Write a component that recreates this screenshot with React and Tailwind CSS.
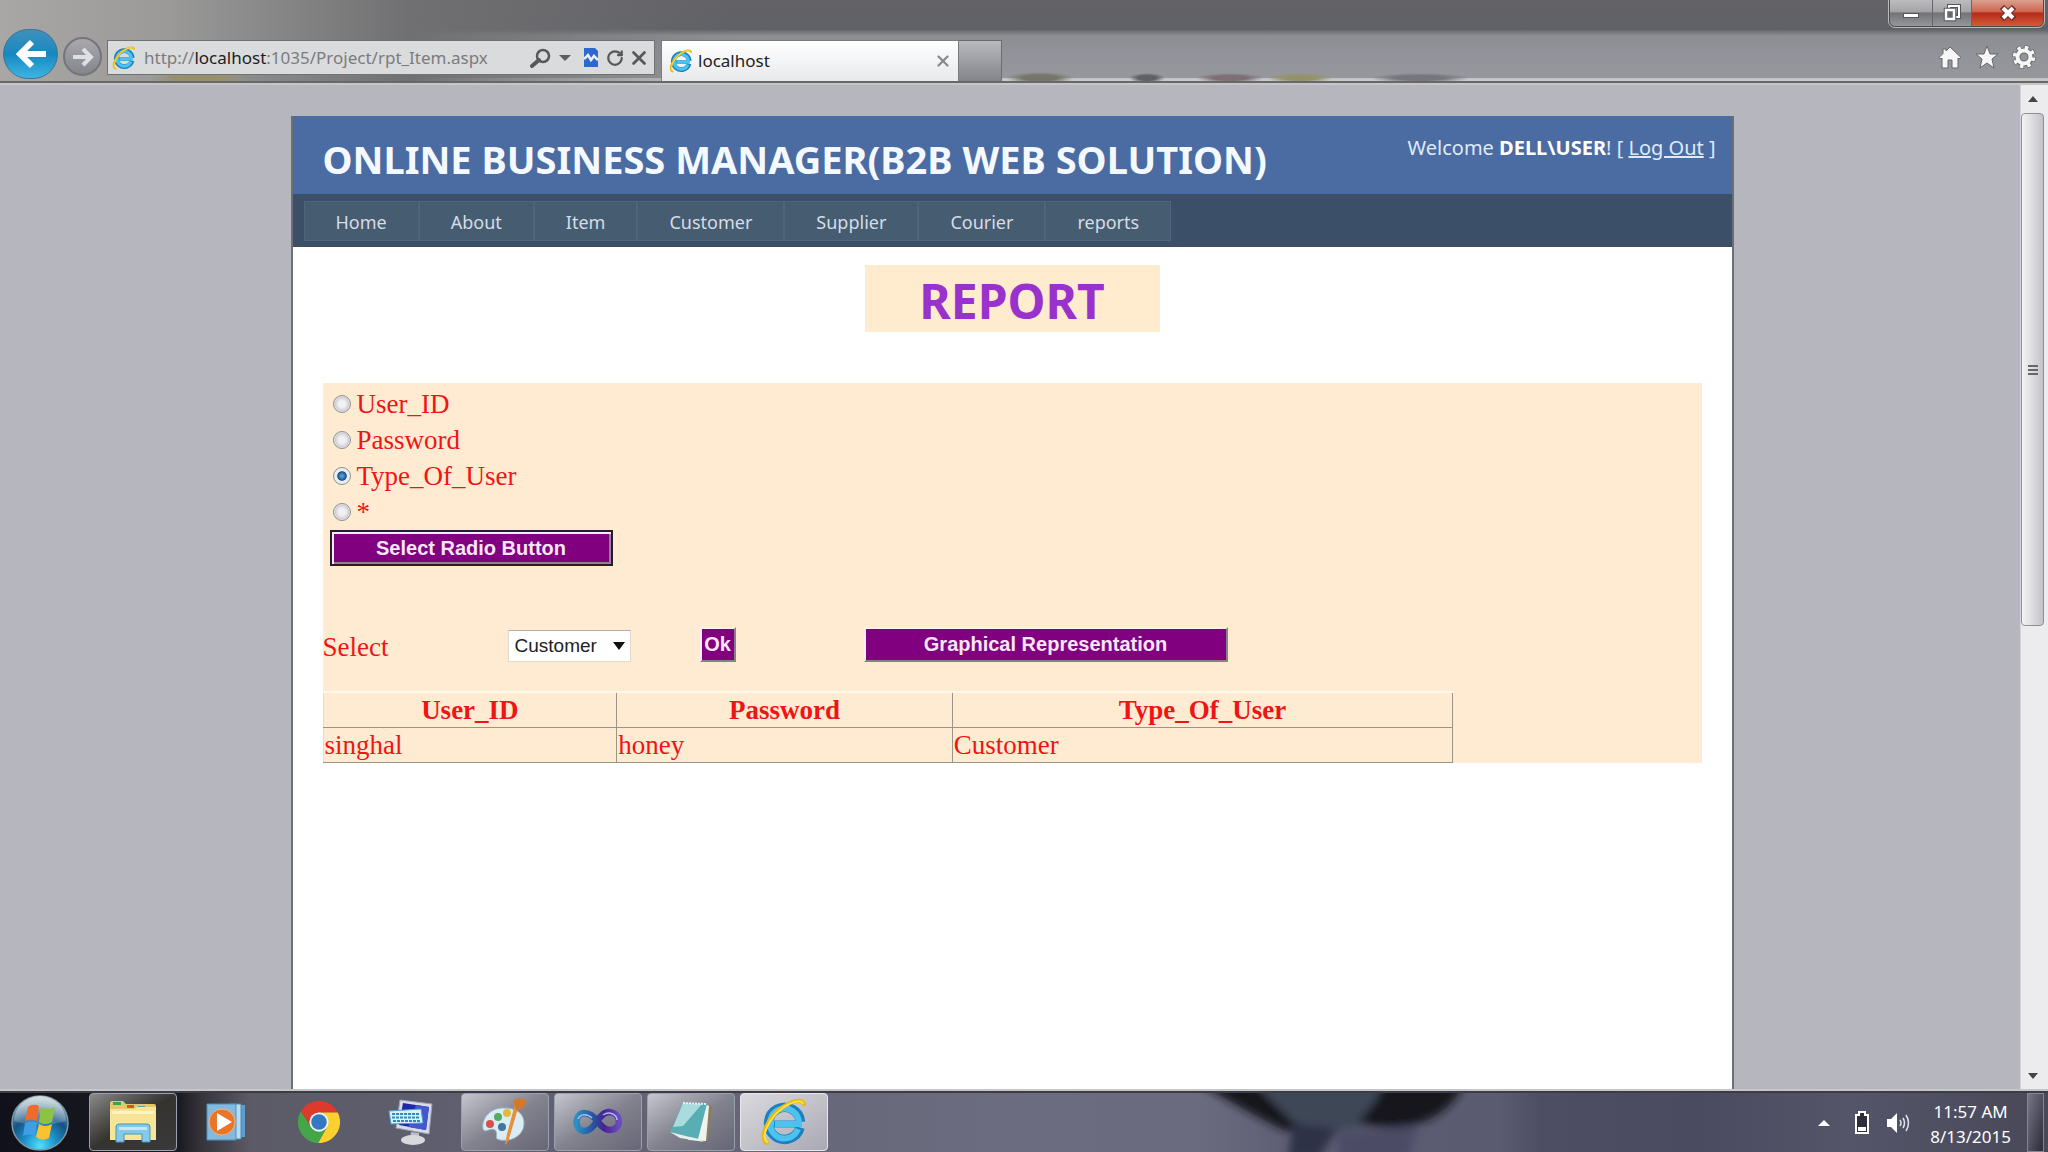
import { useState } from 'react';
import { RotateCw, X } from 'lucide-react';

const navItems = ['Home', 'About', 'Item', 'Customer', 'Supplier', 'Courier', 'reports'];
const fields = ['User_ID', 'Password', 'Type_Of_User', '*'];
const columns = ['User_ID', 'Password', 'Type_Of_User'];
const rows = [['singhal', 'honey', 'Customer']];

const IeLogo = ({ className }) => (
    <svg viewBox="0 0 48 48" className={className} aria-hidden="true">
        <path d="M39 26H14" stroke="#1c8fd0" strokeWidth="7" fill="none" />
        <path d="M40 29.500A16 16 0 1 1 40.500 24" stroke="#1c7fc0" strokeWidth="9.500" fill="none" />
        <path d="M38 31A14.500 15 0 1 1 39 26H15" stroke="#4cc3ee" strokeWidth="6" fill="none" />
        <path d="M7 45C-2 40 8 19 23 9C33 2 43 1 44 6" stroke="#e8b80c" strokeWidth="4" fill="none" strokeLinecap="round" />
        <path d="M7 44C0 38 10 19 24 9C33 3 41 2 43 5" stroke="#fbe04a" strokeWidth="2" fill="none" strokeLinecap="round" />
    </svg>
);

const StartOrb = () => (
    <svg viewBox="0 0 58 56" className="h-14 w-[58px]" aria-hidden="true">
        <defs>
            <radialGradient id="orb" cx="50%" cy="92%" r="85%">
                <stop offset="0" stopColor="#4fe0ff" />
                <stop offset="0.35" stopColor="#1b8fc8" />
                <stop offset="0.65" stopColor="#155385" />
                <stop offset="1" stopColor="#7f9fae" />
            </radialGradient>
            <linearGradient id="orbShine" x1="0" y1="0" x2="0" y2="1">
                <stop offset="0" stopColor="#fff" stopOpacity="0.65" />
                <stop offset="1" stopColor="#fff" stopOpacity="0.15" />
            </linearGradient>
        </defs>
        <ellipse cx="29" cy="28" rx="28" ry="27" fill="url(#orb)" stroke="#7d97a5" strokeWidth="1.500" />
        <path d="M3 26A26 25 0 0 1 55 26Q29 34 3 26Z" fill="url(#orbShine)" />
        <path d="M17 12Q22 8 28 11L26 26Q20 23 14 26Z" fill="#ee6b2c" />
        <path d="M30 12Q37 16 44 12L41 27Q34 31 28 27Z" fill="#8dc343" />
        <path d="M14 28Q20 25 26 28L24 41Q18 38 12 41Z" fill="#3f9fe6" />
        <path d="M28 29Q34 33 41 29L38 43Q31 47 25 42Z" fill="#fcc22e" />
    </svg>
);

const ExplorerIcon = () => (
    <svg viewBox="0 0 50 44" className="h-11 w-[50px]" aria-hidden="true">
        <path d="M2 3Q2 1 4 1H15L18 4H46Q48 4 48 6V40H2Z" fill="#e5c669" />
        <path d="M5 2H13V5H5Z" fill="#3aa357" />
        <path d="M19 5H26V8H19Z" fill="#d0562f" />
        <path d="M30 6H37V10H30Z" fill="#4a9fc4" />
        <path d="M2 9H26L29 7H48V40H2Z" fill="#f7e597" />
        <path d="M4 11H46V14H4Z" fill="#fdf4c2" />
        <path d="M8 42V27Q8 24 11 24H39Q42 24 42 27V42H34V34H16V42Z" fill="#85c9e8" stroke="#4796bd" />
        <path d="M11 27H39V30H11Z" fill="#c3e9f8" />
    </svg>
);

const MediaIcon = () => (
    <svg viewBox="0 0 40 38" className="h-[38px] w-10" aria-hidden="true">
        <path d="M28 2H39V34H28Z" fill="#5f9cc8" />
        <path d="M24 1H35V36H24Z" fill="#b8dcf1" stroke="#4b8cb8" />
        <path d="M1 1H30V37H1Z" fill="#83b9df" stroke="#4e8fbd" />
        <circle cx="16" cy="19" r="13" fill="#e8762a" stroke="#f4b483" />
        <path d="M11 10L26 19L11 28Z" fill="#fff" />
    </svg>
);

const ChromeIcon = () => (
    <svg viewBox="0 0 48 48" className="h-11 w-11" aria-hidden="true">
        <path d="M24 13.500H44.400A23 23 0 0 0 4.100 12.500L15 29Z" fill="#db3a2c" />
        <path d="M33 29L23 47A23 23 0 0 0 44.400 13.500H24Z" fill="#fbd02f" />
        <path d="M15 29L4.100 12.500A23 23 0 0 0 23 47L33 29Z" fill="#44a648" />
        <circle cx="24" cy="24" r="10.500" fill="#f1f3f5" />
        <circle cx="24" cy="24" r="8.500" fill="#3478c4" />
    </svg>
);

const DisplayIcon = () => (
    <svg viewBox="0 0 48 48" className="h-12 w-12" aria-hidden="true">
        <path d="M12 2L44 6L41 36L8 30Z" fill="#d7dce6" stroke="#9aa3b5" />
        <path d="M15 5L41 9L38 32L11 27Z" fill="#1d2aa8" />
        <path d="M28 7L41 9L38 32L20 29Z" fill="#4557cf" />
        <path d="M1 13L33 11L35 25L3 26Z" fill="#d8f0fb" stroke="#4f9fc7" />
        <path d="M4 16H31M4 19.500H32M5 23H33" stroke="#3089bd" strokeWidth="2" strokeDasharray="3 1" />
        <path d="M23 34L31 35V40H22Z" fill="#b9bdc6" />
        <ellipse cx="25" cy="42" rx="12" ry="5" fill="#d9d9dd" />
    </svg>
);

const PaintIcon = () => (
    <svg viewBox="0 0 48 50" className="h-[50px] w-12" aria-hidden="true">
        <path d="M24 11C10 10 0 21 2 32C4 37 9 30 14 33C18 37 12 42 19 43C33 45 43 37 43 26C43 17 36 11 24 11Z" fill="#dcecf4" stroke="#92b6cb" />
        <circle cx="9" cy="27" r="4" fill="#d9504b" />
        <circle cx="17" cy="20" r="4" fill="#54ad62" />
        <circle cx="26" cy="16" r="4" fill="#e5b93c" />
        <circle cx="21" cy="30" r="4" fill="#42759f" />
        <path d="M38 8L28 42Q25 49 24 47L26 37L34 7Z" fill="#e2923a" />
        <path d="M32 3L39 1L46 4L42 11L35 13Z" fill="#d3792c" />
    </svg>
);

const StudioIcon = () => (
    <svg viewBox="0 0 50 28" className="h-7 w-[50px]" aria-hidden="true">
        <defs>
            <linearGradient id="studio" x1="0" y1="0" x2="1" y2="0">
                <stop offset="0" stopColor="#2b8fc0" />
                <stop offset="0.45" stopColor="#284a9c" />
                <stop offset="0.65" stopColor="#4b2190" />
                <stop offset="1" stopColor="#6a4bc2" />
            </linearGradient>
        </defs>
        <path d="M25 14C20 7 15 5 11 5C1 6 1 22 11 23C23 23 25 4 36 4C49 5 49 22 37 22C32 22 28 18 25 14Z" fill="none" stroke="url(#studio)" strokeWidth="6.500" />
        <path d="M5 11C7 6 14 5 19 10M30 7C36 3 44 6 44 12" fill="none" stroke="#a5b9ef" strokeWidth="1.500" />
    </svg>
);

const NotepadIcon = () => (
    <svg viewBox="0 0 46 44" className="h-11 w-[46px]" aria-hidden="true">
        <path d="M38 5L44 6L40 40L34 42Z" fill="#8a7d5a" />
        <path d="M37 4L41 6L38 41L20 40Z" fill="#eef3ef" />
        <path d="M15 3L39 4L30 39L2 32Z" fill="#59aeb3" />
        <path d="M15 3L34 4L15 26L5 27Z" fill="#a9dcdc" />
        <path d="M2 32L30 39L36 42L12 38Z" fill="#e4efee" />
        <path d="M15 3L39 4" stroke="#e6f2f2" strokeWidth="2" strokeDasharray="2 1" />
    </svg>
);

const glass = 'border border-gray-400 bg-linear-to-br from-[#c6c6cf] via-[#83838f] to-[#666676]';

const pinned = [
    { name: 'Windows Explorer', icon: <ExplorerIcon />, style: 'border border-gray-400 bg-linear-to-br from-[#8b8b8b] via-[#34332f] to-[#3b3a3c]' },
    { name: 'Media Player', icon: <MediaIcon />, style: '' },
    { name: 'Chrome', icon: <ChromeIcon />, style: '' },
    { name: 'On-Screen Display', icon: <DisplayIcon />, style: '' },
    { name: 'Paint', icon: <PaintIcon />, style: glass },
    { name: 'Visual Studio', icon: <StudioIcon />, style: glass },
    { name: 'Notepad', icon: <NotepadIcon />, style: glass },
    { name: 'Internet Explorer', icon: <IeLogo className="h-12 w-12" />, style: 'border border-gray-200 bg-linear-to-br from-[#d9d9de] via-[#c3c2c9] to-[#a9a8b4]' },
];

const BrowserBar = () => (
    <header className="flex h-[83px] shrink-0 items-stretch border-b-2 border-[#686868] bg-[radial-gradient(ellipse_50px_8px_at_200px_78px,#97906f_50%,transparent_100%),radial-gradient(ellipse_34px_6px_at_1040px_78px,#77746a_50%,transparent_100%),radial-gradient(ellipse_18px_5px_at_1147px_78px,#5f6066_50%,transparent_100%),radial-gradient(ellipse_34px_5px_at_1230px_78px,#7d6f73_50%,transparent_100%),radial-gradient(ellipse_34px_5px_at_1300px_78px,#94926c_50%,transparent_100%),radial-gradient(ellipse_50px_5px_at_1420px_78px,#78757f_50%,transparent_100%),linear-gradient(to_right,#a9a7a5_0%,#9b9a99_8%,#707072_20%,transparent_36%),linear-gradient(to_bottom,#626267_0%,#606166_36%,#8d8e92_44%,#92949b_70%,#96979c_96%,#c8c8c8_97%)]">
        <div className="flex items-end gap-[5px] pb-[2px] pl-[3px]">
            <button type="button" aria-label="Back" className="flex h-[50px] w-[55px] items-center justify-center rounded-full border border-[#47718c] bg-linear-to-b from-[#3d91bd] via-[#1588bf] to-[#3bb5e4]">
                <svg viewBox="0 0 32 30" className="h-[30px] w-8">
                    <path d="M17 3L5 15L17 27M6 15H31" fill="none" stroke="#fff" strokeWidth="6" />
                </svg>
            </button>
            <button type="button" aria-label="Forward" className="mb-[3px] flex h-[39px] w-[39px] items-center justify-center rounded-full border-2 border-[#74757b] bg-linear-to-b from-[#a8a8ad] to-[#85868d]">
                <svg viewBox="0 0 24 22" className="h-[22px] w-6">
                    <path d="M12 3L20 11L12 19M2 11H20" fill="none" stroke="#dedfe2" strokeWidth="4" />
                </svg>
            </button>
        </div>
        <div className="mt-10 ml-[5px] flex h-[35px] w-[548px] items-center border border-[#717274] bg-[#dadbdc] pr-1 pl-1 text-[#58585a]">
            <IeLogo className="h-6 w-6 shrink-0" />
            <div className="ml-2 flex-1 font-['Noto_Sans','Open_Sans',sans-serif] text-[17px] text-[#7c7c7e]">
                http://<span className="text-[#1d1d1f]">localhost</span>:1035/Project/rpt_Item.aspx
            </div>
            <button type="button" aria-label="Search">
                <svg viewBox="0 0 22 20" className="h-5 w-[22px]">
                    <ellipse cx="14" cy="8" rx="6" ry="6" fill="none" stroke="#58585a" strokeWidth="2.500" />
                    <path d="M10 12L3 18" stroke="#58585a" strokeWidth="4" strokeLinecap="round" />
                </svg>
            </button>
            <svg viewBox="0 0 12 6" className="mx-2 h-[6px] w-3"><path d="M0 0H12L6 6Z" fill="#5d5d5f" /></svg>
            <button type="button" aria-label="Compatibility view" className="ml-[5px]">
                <svg viewBox="0 0 14 19" className="h-[19px] w-[14px]">
                    <path d="M0 0H11L14 3V19H0Z" fill="#2c68cf" />
                    <path d="M0 11L4 7L7 12L10 8L14 12" fill="none" stroke="#e6effb" strokeWidth="2.500" />
                </svg>
            </button>
            <button type="button" aria-label="Refresh" className="ml-2"><RotateCw className="h-[18px] w-[18px]" strokeWidth={3} /></button>
            <button type="button" aria-label="Stop" className="ml-1"><X className="h-[22px] w-[22px]" strokeWidth={3} /></button>
        </div>
        <div className="mt-10 ml-[6px] flex w-[298px] items-center border border-b-0 border-[#7b7c80] bg-linear-to-b from-white to-[#e8e9eb] pr-[6px] pl-[7px]">
            <IeLogo className="h-6 w-6 shrink-0" />
            <span className="ml-[5px] flex-1 font-['Noto_Sans','Open_Sans',sans-serif] text-[17px] text-[#222]">localhost</span>
            <button type="button" aria-label="Close tab" className="text-[#8b8b8b]"><X className="h-[18px] w-[18px]" strokeWidth={3} /></button>
        </div>
        <button type="button" aria-label="New tab" className="mt-10 w-[43px] border border-b-0 border-l-0 border-[#6c6d72] bg-linear-to-b from-[#b9babe] to-[#83848a]" />
        <div className="ml-auto flex flex-col items-end">
            <div className="mr-1 flex h-[27px] overflow-hidden rounded-b-md border border-t-0 border-[#4d4d50] outline outline-[#b9b9ba]">
                <button type="button" aria-label="Minimize" className="flex w-[43px] items-end justify-center border-r border-[#66676b] bg-[linear-gradient(to_bottom,#bcbcbe_0%,#a4a4a7_45%,#727277_50%,#96969b_100%)] pb-2">
                    <span className="h-[5px] w-4 border border-[#55565a] bg-white" />
                </button>
                <button type="button" aria-label="Restore" className="flex w-[39px] items-center justify-center border-r border-[#66676b] bg-[linear-gradient(to_bottom,#bcbcbe_0%,#a4a4a7_45%,#727277_50%,#96969b_100%)]">
                    <svg viewBox="0 0 18 18" className="h-[18px] w-[18px]">
                        <path d="M6 5V2H16V13H12" fill="none" stroke="#55565a" strokeWidth="4" />
                        <path d="M6 5V2H16V13H12" fill="none" stroke="#fff" strokeWidth="2" />
                        <path d="M3 6H11V15H3Z" fill="#77777c" stroke="#55565a" strokeWidth="4.500" />
                        <path d="M3 6H11V15H3Z" fill="#66676b" stroke="#fff" strokeWidth="2.500" />
                    </svg>
                </button>
                <button type="button" aria-label="Close" className="flex w-[71px] items-center justify-center bg-[linear-gradient(to_bottom,#dca08f_0%,#cc6650_45%,#b52a17_50%,#d45a3a_100%)]">
                    <svg viewBox="0 0 18 16" className="h-4 w-[18px]">
                        <path d="M3 2L15 14M15 2L3 14" stroke="#6b2a22" strokeWidth="6" />
                        <path d="M4 3L14 13M14 3L4 13" stroke="#fff" strokeWidth="4" />
                    </svg>
                </button>
            </div>
            <div className="mt-[18px] mr-3 flex gap-[13px]">
                <button type="button" aria-label="Home">
                    <svg viewBox="0 0 24 24" className="h-6 w-6">
                        <path d="M12 2L23 12.500L21 14L20 13V23H14V15H10V23H4V13L3 14L1 12.500L5 8.500V4H8V6Z" fill="#f6f6f6" stroke="#66676c" />
                    </svg>
                </button>
                <button type="button" aria-label="Favorites">
                    <svg viewBox="0 0 24 24" className="h-6 w-6">
                        <path d="M12 1L15 9H23L17 14L19 23L12 18L5 23L7 14L1 9H9Z" fill="#f6f6f6" stroke="#66676c" />
                    </svg>
                </button>
                <button type="button" aria-label="Tools">
                    <svg viewBox="0 0 24 24" className="h-6 w-6">
                        <circle cx="12" cy="12" r="9.500" fill="none" stroke="#66676c" strokeWidth="5" strokeDasharray="4.500 2.960" />
                        <circle cx="12" cy="12" r="6.500" fill="none" stroke="#66676c" strokeWidth="6" />
                        <circle cx="12" cy="12" r="9.500" fill="none" stroke="#f6f6f6" strokeWidth="3.500" strokeDasharray="3.500 3.960" strokeDashoffset="-0.500" />
                        <circle cx="12" cy="12" r="6.500" fill="none" stroke="#f6f6f6" strokeWidth="4" />
                    </svg>
                </button>
            </div>
        </div>
    </header>
);

const ScrollBar = () => (
    <div className="flex w-7 shrink-0 flex-col border-l border-[#d6d6d8] bg-[#ececee] pr-1">
        <button type="button" aria-label="Scroll up" className="flex h-7 shrink-0 items-center justify-center">
            <svg viewBox="0 0 10 6" className="h-[6px] w-[10px]"><path d="M5 0L10 6H0Z" fill="#444" /></svg>
        </button>
        <div className="flex-1">
            <div className="flex h-[54%] flex-col items-center justify-center gap-[2px] rounded-sm border border-[#8f9095] bg-linear-to-r from-[#f4f4f5] via-[#dcdcdf] to-[#c2c2c8]">
                <span className="h-[2px] w-[10px] bg-[#66676c]" />
                <span className="h-[2px] w-[10px] bg-[#66676c]" />
                <span className="h-[2px] w-[10px] bg-[#66676c]" />
            </div>
        </div>
        <button type="button" aria-label="Scroll down" className="flex h-[26px] shrink-0 items-center justify-center">
            <svg viewBox="0 0 10 6" className="h-[6px] w-[10px]"><path d="M0 0H10L5 6Z" fill="#444" /></svg>
        </button>
    </div>
);

const Taskbar = () => (
    <footer className="relative flex h-[61px] shrink-0 items-stretch border-t-2 border-[#3c3c46] bg-[linear-gradient(to_right,#10111a_0px,#1b1b22_180px,#34333a_200px,#5b5a66_250px,#5f5e6e_430px,#6c6c80_1000px,#6b6b80_1200px,#5c5c72_1300px,#5a5a70_1500px,#4d4e64_1540px,#4a4b60_1700px,#55556a_1850px,#484858_2048px)]">
        {/* wallpaper showing through the glass */}
        <svg viewBox="0 0 360 59" className="pointer-events-none absolute top-0 left-[58%] h-[59px] w-[360px]" aria-hidden="true">
            <defs>
                <filter id="soft"><feGaussianBlur stdDeviation="4" /></filter>
            </defs>
            <g filter="url(#soft)">
                <path d="M70 -8H220L200 30L130 40L105 30Z" fill="#3d4757" />
                <path d="M105 30L150 36L130 66H100Z" fill="#2f3046" />
                <path d="M150 40L230 32L220 66H150Z" fill="#4b4c66" />
                <path d="M14 -8H68L110 34L98 38Q60 20 14 -8Z" fill="#15161a" />
                <path d="M195 -8H275Q262 22 225 32Q190 38 170 28Q188 12 195 -8Z" fill="#15161a" />
            </g>
        </svg>
        <button type="button" aria-label="Start" className="ml-[11px] flex w-[58px] items-center justify-center"><StartOrb /></button>
        <nav className="ml-5 flex gap-[5px] pb-px">
            {pinned.map((app) => (
                <button key={app.name} type="button" aria-label={app.name} className={`flex w-[88px] items-center justify-center rounded-sm ${app.style}`}>
                    {app.icon}
                </button>
            ))}
        </nav>
        <div className="ml-auto flex items-center text-white">
            <svg viewBox="0 0 12 6" className="h-[6px] w-3"><path d="M6 0L12 6H0Z" fill="#fff" /></svg>
            <svg viewBox="0 0 16 24" className="ml-6 h-6 w-4">
                <path d="M5 1H11V4H14V22H2V4H5Z" fill="#2e2f3c" stroke="#fff" strokeWidth="2" />
                <path d="M4 16H12V20H4Z" fill="#fff" />
            </svg>
            <svg viewBox="0 0 24 24" className="ml-4 h-6 w-6">
                <path d="M1 8H5L11 2V22L5 16H1Z" fill="#fff" />
                <path d="M14 9Q16 12 14 15M17 7Q20 12 17 17M20 4Q25 12 20 20" fill="none" stroke="#e2e2ea" strokeWidth="1.500" />
            </svg>
            <div className="ml-5 pt-[3px] text-center font-['Noto_Sans','Open_Sans',sans-serif] text-[17px] leading-[25px]">
                <div>11:57 AM</div>
                <div>8/13/2015</div>
            </div>
        </div>
        <button type="button" aria-label="Show desktop" className="mr-1 ml-4 w-[17px] border border-[#85859a] bg-linear-to-br from-[#77778a] to-[#2d2d38]" />
    </footer>
);

const bevel = 'border-2 border-t-[#fbeef5] border-l-[#fbeef5] border-r-[#86808c] border-b-[#86808c] bg-[#800080] font-bold text-[#f8e6f8]';

const App = () => {
    const [field, setField] = useState('Type_Of_User');
    const [userType, setUserType] = useState('Customer');

    return (
        <div className="flex min-h-screen flex-col overflow-hidden bg-[#b6b6be]">
            <BrowserBar />
            <div className="flex flex-1 border-t-2 border-b-2 border-[#c6c6c8]">
                <main className="flex flex-1 justify-center pt-[31px] pl-1">
                    <div className="flex w-[1443px] max-w-full flex-col border-x-2 border-[#6a7078] bg-white">
                        <div className="flex h-[78px] items-start justify-between bg-[#4b6ca3] pr-4 pl-[30px] font-['Noto_Sans','Open_Sans',sans-serif]">
                            <h1 className="pt-4 text-[38px] leading-[54px] font-bold whitespace-nowrap text-[#f4f9ff]">ONLINE BUSINESS MANAGER(B2B WEB SOLUTION)</h1>
                            <div className="pt-4 text-xl leading-8 whitespace-nowrap text-[#dfeaf8]">
                                Welcome <span className="font-bold text-white">DELL\USER</span>! [ <a href="#logout" className="underline">Log Out</a> ]
                            </div>
                        </div>
                        <nav className="flex h-[53px] border-b border-[#45494f] bg-[#3b4f69] pt-[7px] pb-[5px] pl-[11px] font-['Noto_Sans','Open_Sans',sans-serif] text-lg">
                            {navItems.map((item) => (
                                <a key={item} href={`#${item}`} className="flex items-center border border-[#4e667d] bg-[#465c71] px-[31px] pt-px text-[#d5dde6]">{item}</a>
                            ))}
                        </nav>
                        <div className="px-[30px] pt-[18px] pb-16">
                            <h2 className="mx-auto h-[67px] w-[295px] bg-[#ffebcd] text-center font-['Noto_Sans','Open_Sans',sans-serif] text-5xl leading-[72px] font-bold text-[#9932cc]">REPORT</h2>
                            <form onSubmit={(e) => e.preventDefault()} className="mt-[51px] bg-[#ffebd2] font-['Liberation_Serif',serif] text-[27px] leading-8 text-[#f01414]">
                                <fieldset className="pt-[3px] pl-[10px]">
                                    {fields.map((name) => (
                                        <label key={name} className="flex h-9 w-fit items-center gap-[6px]">
                                            <input
                                                type="radio"
                                                name="field"
                                                value={name}
                                                checked={field === name}
                                                onChange={() => setField(name)}
                                                className="h-[18px] w-[18px] appearance-none rounded-full border border-[#8e8f8f] bg-[radial-gradient(circle,#f2f2f4_30%,#cfcfd6_60%,#f6f6f6_75%)] checked:bg-[radial-gradient(circle,#4f9fd8_8%,#1b4f86_38%,#e6ebf0_46%,#f2f2f2_80%)]"
                                            />
                                            {name}
                                        </label>
                                    ))}
                                </fieldset>
                                <div className="pl-[7px]">
                                    <button type="submit" className="h-9 w-[283px] border-2 border-[#2b1a2b] bg-[#800080] font-['Liberation_Sans',sans-serif] text-xl leading-7 font-bold text-[#f8e6f8] shadow-[inset_2px_2px_#f6eef6,inset_-2px_-2px_#8d8591]">
                                        Select Radio Button
                                    </button>
                                </div>
                                <div className="mt-[59px] flex items-center">
                                    <label htmlFor="userType" className="w-[185px] pt-[6px]">Select</label>
                                    <div className="relative w-[123px] pt-1">
                                        <select
                                            id="userType"
                                            value={userType}
                                            onChange={(e) => setUserType(e.target.value)}
                                            className="block h-8 w-full appearance-none border border-[#e3d9cc] border-t-[#b5b0aa] bg-white pl-[6px] font-['Liberation_Sans',sans-serif] text-[19px] leading-7 text-[#222]"
                                        >
                                            <option>Customer</option>
                                            <option>Supplier</option>
                                        </select>
                                        <svg viewBox="0 0 12 8" className="pointer-events-none absolute top-4 right-[6px] h-2 w-3"><path d="M0 0H12L6 8Z" fill="#111" /></svg>
                                    </div>
                                    <button type="button" className={`ml-[69px] h-[35px] w-9 font-['Liberation_Sans',sans-serif] text-xl leading-7 ${bevel}`}>Ok</button>
                                    <button type="button" className={`ml-32 h-[35px] w-[364px] font-['Liberation_Sans',sans-serif] text-xl leading-7 ${bevel}`}>Graphical Representation</button>
                                </div>
                                <table className="mt-7 w-[82%] table-fixed border-collapse border border-t-2 border-[#9a9584] border-t-[#fff8ea] border-l-[#e8dcc4]">
                                    <colgroup>
                                        <col className="w-[26%]" />
                                        <col className="w-[29.7%]" />
                                        <col />
                                    </colgroup>
                                    <thead>
                                        <tr className="h-[35px]">
                                            {columns.map((col) => (
                                                <th key={col} className="border-r border-b border-[#9a9584] font-bold">{col}</th>
                                            ))}
                                        </tr>
                                    </thead>
                                    <tbody>
                                        {rows.map((row) => (
                                            <tr key={row[0]} className="h-[35px]">
                                                {row.map((cell) => (
                                                    <td key={cell} className="border-r border-b border-[#9a9584] pl-px">{cell}</td>
                                                ))}
                                            </tr>
                                        ))}
                                    </tbody>
                                </table>
                            </form>
                        </div>
                    </div>
                </main>
                <ScrollBar />
            </div>
            <Taskbar />
        </div>
    );
};

export default App;
